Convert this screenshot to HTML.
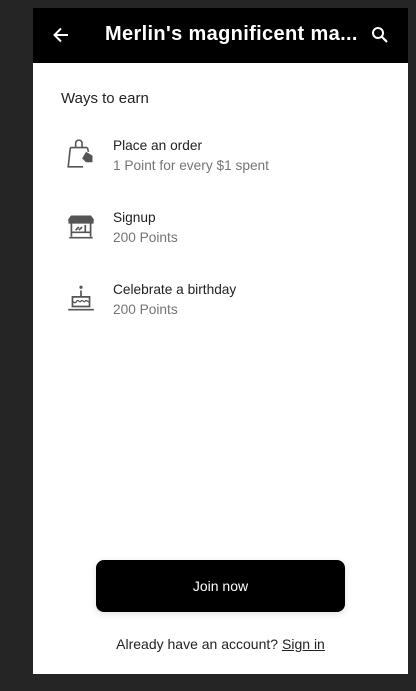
<!DOCTYPE html>
<html><head><style>
*{margin:0;padding:0;box-sizing:border-box}
body{width:416px;height:691px;background:#252525;font-family:"Liberation Sans",Roboto,sans-serif;position:relative;overflow:hidden}
.panel{position:absolute;left:33px;top:8px;width:375px;height:666px;background:#fff}
.hdr{position:absolute;left:0;top:0;width:375px;height:55px;background:#000;color:#fff}
.title{position:absolute;left:72px;top:15px;font-size:20px;font-weight:bold;letter-spacing:0.35px;white-space:nowrap}
.h2{position:absolute;left:28px;top:82px;font-size:15px;color:#222}
.item{position:absolute;left:80px;font-size:13.7px;color:#222}
.item .s{color:#757575;margin-top:5px}
.ic{position:absolute;left:32px}
.btn{position:absolute;left:63px;top:552px;width:249px;height:52px;background:#000;border-radius:8px;color:#fff;font-size:14px;text-align:center;line-height:52px;box-shadow:0 2px 8px rgba(0,0,0,.12)}
.foot{position:absolute;left:0;width:375px;top:628px;text-align:center;font-size:14px;color:#222}
.foot u{margin-left:4px}
</style></head><body>
<div class="panel">
<div class="hdr">
<svg style="position:absolute;left:18px;top:17px" width="20" height="20" viewBox="0 0 20 20"><path d="M17 10H4M10 3.5L3.5 10L10 16.5" stroke="#fff" stroke-width="2" fill="none"/></svg>
<div class="title">Merlin's magnificent ma...</div>
<svg style="position:absolute;left:337px;top:17px" width="20" height="20" viewBox="0 0 20 20"><circle cx="8" cy="8" r="5" stroke="#fff" stroke-width="2" fill="none"/><path d="M11.5 11.5L17 17" stroke="#fff" stroke-width="2.2"/></svg>
</div>
<div class="h2">Ways to earn</div>
<svg class="ic" style="top:130px" width="32" height="32" viewBox="0 0 30 30" fill="none" stroke="#555" stroke-width="1.5"><path d="M10 9V5a3 3 0 0 1 6 0v4"/><path d="M5 9h16M5 9L3 27h14M21 9l1 4"/><path d="M20 14l5 3v5h-5l-3-3z" fill="#555"/></svg>
<div class="item" style="top:130px">Place an order<div class="s">1 Point for every $1 spent</div></div>
<svg class="ic" style="top:203px" width="32" height="32" viewBox="0 0 30 30" fill="none" stroke="#555" stroke-width="1.6"><path d="M4 8h22v3H4zM6 5h18l2 3H4z" fill="#555"/><path d="M6 11v13M24 11v13M4 25h22"/><path d="M6 20h18M19 13v7M10 18l3-3M13 18l3-3"/></svg>
<div class="item" style="top:202px">Signup<div class="s">200 Points</div></div>
<svg class="ic" style="top:275px" width="32" height="32" viewBox="0 0 30 30" fill="none" stroke="#555" stroke-width="1.6"><circle cx="15" cy="4" r="1.5" fill="#555" stroke="none"/><path d="M15 7v6"/><path d="M7 13h16v9H7zM3 25h24"/><path d="M7 17c2 2 3 2 4 0s3 2 4 0 3 2 4 0 3 2 4 0" stroke-width="1.2"/></svg>
<div class="item" style="top:274px">Celebrate a birthday<div class="s">200 Points</div></div>
<div class="btn">Join now</div>
<div class="foot">Already have an account?<u>Sign in</u></div>
</div>
</body></html>
